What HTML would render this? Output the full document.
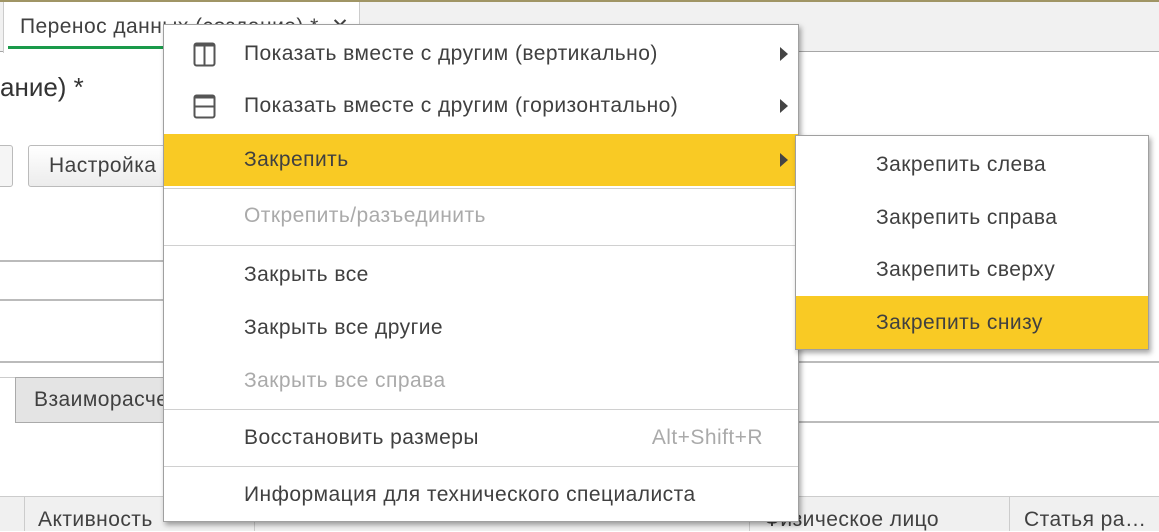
<!DOCTYPE html>
<html><head><meta charset="utf-8"><style>
*{margin:0;padding:0;box-sizing:border-box}
body{width:1159px;height:531px;overflow:hidden;background:#fff;font-family:"Liberation Sans",sans-serif;color:#333;position:relative;letter-spacing:.45px}
.a{position:absolute;white-space:nowrap}
.t{font-size:21px;color:#404040}
.mi{position:absolute;left:0;right:0;height:52px;line-height:52px;padding-left:80px;font-size:21px;color:#404040;white-space:nowrap}
.dis{color:#aaa}
.sep{position:absolute;left:0;right:0;height:1px;background:#d0d0d0}
.arr{position:absolute;right:10px;top:19px;width:0;height:0;border-left:8px solid #444;border-top:7px solid transparent;border-bottom:7px solid transparent}
.si{position:absolute;left:0;right:0;height:53px;line-height:53px;padding-left:80px;font-size:21px;color:#404040;white-space:nowrap}
</style></head><body>
<div class="a" style="left:0;top:0;width:1159px;height:2px;background:#a09565"></div>
<div class="a" style="left:0;top:2px;width:1159px;height:50px;background:#f1f1f1;border-bottom:1px solid #a6a6a6"></div>
<div class="a" style="left:3px;top:2px;width:357px;height:51px;background:#fff;border-left:1px solid #ccc;border-right:1px solid #ccc"></div>
<div class="a t" style="left:20px;top:14px">Перенос данных (создание) * &nbsp;✕</div>
<div class="a" style="left:8px;top:46px;width:155px;height:3px;background:#1a9a4a"></div>
<div class="a" style="left:0;top:72px;font-size:26px;color:#333;letter-spacing:0">ание) *</div>
<div class="a" style="left:-5px;top:145px;width:18px;height:42px;border:1px solid #bbb;border-radius:3px;background:#f5f5f5"></div>
<div class="a t" style="left:28px;top:145px;width:150px;height:42px;border:1px solid #bbb;border-radius:3px;background:linear-gradient(#fff,#ececec);line-height:40px;padding-left:20px">Настройка</div>
<div class="a" style="left:0;top:260px;width:170px;height:2px;background:#bbb"></div>
<div class="a" style="left:0;top:299px;width:170px;height:2px;background:#bbb"></div>
<div class="a" style="left:0;top:361px;width:1159px;height:2px;background:#bbb"></div>
<div class="a" style="left:795px;top:421px;width:364px;height:2px;background:#bbb"></div>
<div class="a" style="left:0;top:377px;width:16px;height:46px;border-right:1px solid #bbb;border-top:1px solid #ccc"></div>
<div class="a t" style="left:15px;top:377px;width:160px;height:46px;background:#e4e4e4;border:1px solid #aaa;line-height:44px;padding-left:18px;overflow:hidden">Взаиморасчеты</div>
<div class="a" style="left:0;top:496px;width:1159px;height:35px;background:#f0f0f0;border-top:1px solid #ccc"></div>
<div class="a" style="left:24px;top:496px;width:1px;height:35px;background:#ccc"></div>
<div class="a" style="left:254px;top:496px;width:1px;height:35px;background:#ccc"></div>
<div class="a" style="left:749px;top:496px;width:1px;height:35px;background:#ccc"></div>
<div class="a" style="left:1009px;top:496px;width:1px;height:35px;background:#ccc"></div>
<div class="a t" style="left:38px;top:508px">Активность</div>
<div class="a t" style="left:764px;top:508px">Физическое лицо</div>
<div class="a t" style="left:1024px;top:508px">Статья ра…</div>

<div class="a" style="left:163px;top:24px;width:636px;height:498px;background:#fff;border:1px solid #a0a0a0;box-shadow:2px 3px 5px rgba(0,0,0,.35)">
 <div class="mi" style="top:3px">Показать вместе с другим (вертикально)<div class="arr"></div></div>
 <svg class="a" style="left:29px;top:17px" width="24" height="26" viewBox="0 0 24 26"><rect x="1.5" y="1.5" width="20" height="22" rx="2" fill="none" stroke="#555" stroke-width="2"/><rect x="1.5" y="1.5" width="20" height="3" fill="#555"/><line x1="11.5" y1="2" x2="11.5" y2="23" stroke="#555" stroke-width="2"/></svg>
 <div class="mi" style="top:55px">Показать вместе с другим (горизонтально)<div class="arr"></div></div>
 <svg class="a" style="left:29px;top:69px" width="24" height="26" viewBox="0 0 24 26"><rect x="1.5" y="1.5" width="20" height="22" rx="2" fill="none" stroke="#555" stroke-width="2"/><rect x="1.5" y="1.5" width="20" height="3" fill="#555"/><line x1="2" y1="12.5" x2="21" y2="12.5" stroke="#555" stroke-width="2"/></svg>
 <div class="mi" style="top:109px;background:#f9ca24">Закрепить<div class="arr"></div></div>
 <div class="sep" style="top:163px"></div>
 <div class="mi dis" style="top:165px">Открепить/разъединить</div>
 <div class="sep" style="top:220px"></div>
 <div class="mi" style="top:224px">Закрыть все</div>
 <div class="mi" style="top:277px">Закрыть все другие</div>
 <div class="mi dis" style="top:330px">Закрыть все справа</div>
 <div class="sep" style="top:384px"></div>
 <div class="mi" style="top:387px">Восстановить размеры<span style="position:absolute;right:35px;color:#aaa">Alt+Shift+R</span></div>
 <div class="sep" style="top:441px"></div>
 <div class="mi" style="top:444px">Информация для технического специалиста</div>
</div>

<div class="a" style="left:795px;top:135px;width:354px;height:215px;background:#fff;border:1px solid #a0a0a0;box-shadow:2px 3px 5px rgba(0,0,0,.35)">
 <div class="si" style="top:2px">Закрепить слева</div>
 <div class="si" style="top:55px">Закрепить справа</div>
 <div class="si" style="top:107px">Закрепить сверху</div>
 <div class="si" style="top:160px;background:#f9ca24">Закрепить снизу</div>
</div>
</body></html>
